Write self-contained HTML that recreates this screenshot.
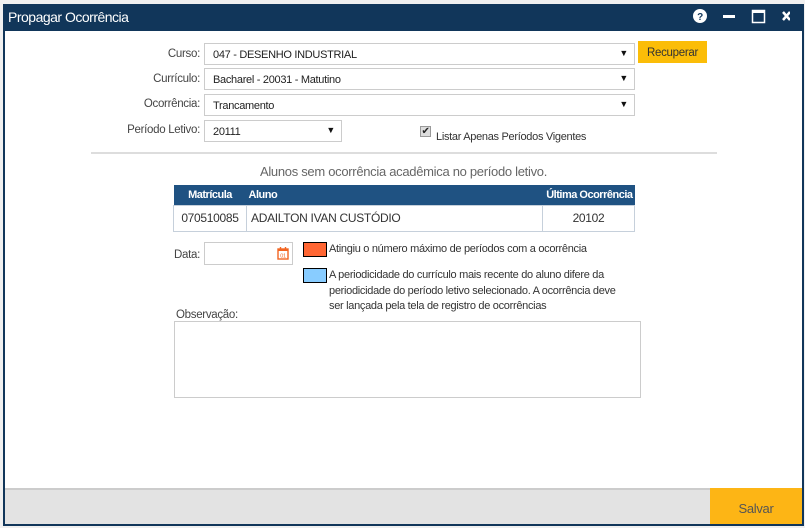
<!DOCTYPE html>
<html><head><meta charset="utf-8"><style>
*{box-sizing:border-box;margin:0;padding:0}
body{width:805px;height:528px;background:#f0f0f0;font-family:"Liberation Sans",sans-serif;font-size:11.5px;color:#222;position:relative;overflow:hidden;letter-spacing:-0.3px}
.a{position:absolute;white-space:nowrap}
.win{left:3px;top:4px;width:801px;height:522px;background:#fff;border:2px solid #11365a}
.title{left:3px;top:4px;width:801px;height:27px;background:#11365a;color:#fff;font-size:14px;padding:5px 0 0 5px;letter-spacing:-0.5px}
.lbl{color:#444;text-align:right;width:120px}
.sel{border:1px solid #ccc;background:#fff;height:22px;padding:5px 0 0 8px;font-size:11px}
.sel:after{content:"▼";position:absolute;right:6px;top:4px;font-size:9px;color:#111}
th{background:#1f5282;color:#fff;font-size:11px;height:20px;font-weight:bold;white-space:nowrap;letter-spacing:-0.5px}
td{border:1px solid #c6d0db;height:26px;font-size:12px;color:#333;white-space:nowrap}
</style></head><body>
<div class="a win"></div>
<div class="a title">Propagar Ocorrência</div>
<svg class="a" style="left:690px;top:7px" width="100" height="20">
<circle cx="10" cy="9" r="7" fill="#fff"/><text x="10" y="13" font-size="10" font-weight="bold" text-anchor="middle" fill="#11365a" font-family="Liberation Sans">?</text>
<rect x="33" y="8" width="12" height="3" fill="#fff"/>
<rect x="62.5" y="3.5" width="12" height="12" fill="none" stroke="#fff" stroke-width="1.5"/><rect x="62" y="3" width="13" height="3" fill="#fff"/>
<path d="M93 5l7 8M100 5l-7 8" stroke="#fff" stroke-width="2.5"/>
</svg>
<div class="a lbl" style="left:80px;top:48px">Curso:</div>
<div class="a lbl" style="left:80px;top:73px">Currículo:</div>
<div class="a lbl" style="left:80px;top:98px">Ocorrência:</div>
<div class="a lbl" style="left:80px;top:124px">Período Letivo:</div>
<div class="a sel" style="left:204px;top:43px;width:431px">047 - DESENHO INDUSTRIAL</div>
<div class="a sel" style="left:204px;top:68px;width:431px">Bacharel - 20031 - Matutino</div>
<div class="a sel" style="left:204px;top:94px;width:431px">Trancamento</div>
<div class="a sel" style="left:204px;top:120px;width:138px">20111</div>
<div class="a" style="left:638px;top:41px;width:69px;height:22px;background:#fbbd08;color:#333;text-align:center;padding-top:6px">Recuperar</div>
<div class="a" style="left:420px;top:126px;width:11px;height:11px;border:1px solid #999;background:#ddd;font-size:10px;line-height:9px;text-align:center">✔</div>
<div class="a" style="left:436px;top:131px;color:#333;font-size:11px">Listar Apenas Períodos Vigentes</div>
<div class="a" style="left:91px;top:152px;width:626px;height:2px;background:#ddd"></div>
<div class="a" style="left:173px;top:164px;width:461px;text-align:center;color:#666;font-size:13px">Alunos sem ocorrência acadêmica no período letivo.</div>
<table class="a" style="left:173px;top:185px;width:462px;border-collapse:collapse">
<tr><th style="width:73px">Matrícula</th><th style="text-align:left;padding-left:2px">Aluno</th><th style="width:92px;text-align:right;padding-right:2px">Última Ocorrência</th></tr>
<tr><td style="text-align:center">070510085</td><td style="padding-left:4px">ADAILTON IVAN CUSTÓDIO</td><td style="text-align:center">20102</td></tr>
</table>
<div class="a" style="left:174px;top:249px;color:#444">Data:</div>
<div class="a" style="left:204px;top:242px;width:89px;height:23px;border:1px solid #ccc"></div>
<svg class="a" style="left:277px;top:246px" width="12" height="14"><rect x="1" y="3" width="10" height="10" fill="none" stroke="#f26522" stroke-width="1.4"/><rect x="1" y="3" width="10" height="2" fill="#f26522"/><path d="M3.5 1v3M8.5 1v3" stroke="#f26522" stroke-width="1.4"/><text x="6" y="11.5" font-size="5.5" text-anchor="middle" fill="#f26522" font-family="Liberation Sans">01</text></svg>
<div class="a" style="left:303px;top:242px;width:24px;height:15px;background:#ff6633;border:1px solid #000"></div>
<div class="a" style="left:329px;top:243px;color:#333;font-size:11px">Atingiu o número máximo de períodos com a ocorrência</div>
<div class="a" style="left:303px;top:268px;width:24px;height:15px;background:#88ccff;border:1px solid #000"></div>
<div class="a" style="left:329px;top:268px;width:302px;line-height:15.5px;color:#333;font-size:11px;white-space:normal">A periodicidade do currículo mais recente do aluno difere da periodicidade do período letivo selecionado. A ocorrência deve ser lançada pela tela de registro de ocorrências</div>
<div class="a" style="left:176px;top:309px;color:#444">Observação:</div>
<div class="a" style="left:174px;top:321px;width:467px;height:77px;border:1px solid #ccc"></div>
<div class="a" style="left:5px;top:488px;width:797px;height:36px;background:#e3e3e3;border-top:2px solid #ccc"></div>
<div class="a" style="left:710px;top:488px;width:92px;height:36px;background:#fdb515;color:#555;font-size:13px;text-align:center;padding-top:13px">Salvar</div>
</body></html>
